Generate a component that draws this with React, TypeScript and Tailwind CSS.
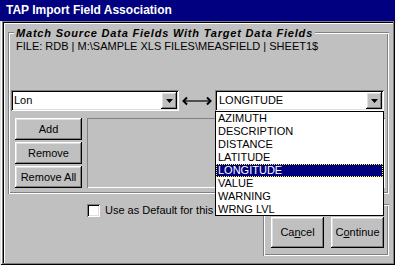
import React from 'react';

const raised =
  'bg-[#c0c0c0] shadow-[inset_-1px_-1px_#000,inset_1px_1px_#fff,inset_-2px_-2px_#808080,inset_2px_2px_#dfdfdf]';
const sunken =
  'shadow-[inset_1px_1px_#808080,inset_-1px_-1px_#fff,inset_2px_2px_#000,inset_-2px_-2px_#dfdfdf]';
const etched =
  'shadow-[inset_1px_1px_#808080,inset_-1px_-1px_#fff,inset_2px_2px_#fff,inset_-2px_-2px_#808080]';

const items = ['AZIMUTH', 'DESCRIPTION', 'DISTANCE', 'LATITUDE', 'LONGITUDE', 'VALUE', 'WARNING', 'WRNG LVL'];

function DropButton() {
  return (
    <div className={`w-[16px] h-[17px] flex items-center justify-center ${raised}`}>
      <svg width="7" height="4" viewBox="0 0 7 4">
        <polygon points="0,0 7,0 3.5,4" fill="#000" />
      </svg>
    </div>
  );
}

function Button({ children, className = '' }: { children: React.ReactNode; className?: string }) {
  return <div className={`flex items-center justify-center ${raised} ${className}`}>{children}</div>;
}

export default function App() {
  return (
    <div className="w-[395px] h-[265px] bg-[#c0c0c0] flex flex-col overflow-hidden text-black text-[11px] leading-[13px] font-['Liberation_Sans',Arial,sans-serif] shadow-[inset_1px_0_#dfdfdf,inset_-1px_-1px_#000,inset_2px_0_#fff,inset_-2px_-2px_#808080]">
      {/* Title bar */}
      <div className="h-[21px] shrink-0 bg-[#000080] text-white font-bold text-[12px] pl-[6px] flex items-center">
        TAP Import Field Association
      </div>

      <div className="flex-1 pl-[2px] pr-[2px] pb-[2px]">
        <div className="h-full pt-[2px] pl-[2px] shadow-[inset_1px_1px_#808080,inset_2px_2px_#000,inset_3px_3px_#fff]">
          {/* Group box */}
          <div className={`relative ml-[4px] mt-[9px] w-[381px] h-[162px] ${etched}`}>
            <div className="absolute left-[6px] top-[-5px] px-[2px] bg-[#c0c0c0] font-bold italic tracking-[0.8px]">
              Match Source Data Fields With Target Data Fields
            </div>
            <div className="pt-[8px] pl-[8px]">FILE: RDB | M:\SAMPLE XLS FILES\MEASFIELD | SHEET1$</div>

            <div className="mt-[37px] ml-[3px] flex items-center">
              <div className={`w-[168px] h-[21px] bg-white p-[2px] flex items-center ${sunken}`}>
                <span className="flex-1 pl-[1px]">Lon</span>
                <DropButton />
              </div>
              <div className="w-[36px] flex justify-center">
                <svg width="30" height="10" viewBox="0 0 30 10">
                  <path d="M5 1.5 L1.5 5 L5 8.5" fill="none" stroke="#000" strokeWidth="2" />
                  <path d="M25 1.5 L28.5 5 L25 8.5" fill="none" stroke="#000" strokeWidth="2" />
                  <line x1="2" y1="5" x2="28" y2="5" stroke="#000" strokeWidth="1.2" />
                </svg>
              </div>
              <div className={`relative w-[169px] h-[21px] bg-white p-[2px] flex items-center ${sunken}`}>
                <span className="flex-1 pl-[2px]">LONGITUDE</span>
                <DropButton />
                <div className="absolute top-full left-0 w-full h-[105px] bg-white border border-black z-10">
                  {items.map((it) => (
                    <div
                      key={it}
                      className={`h-[13px] pl-[2px] ${
                        it === 'LONGITUDE'
                          ? 'bg-[#000080] text-white outline-1 outline-dotted outline-[#ffff00] -outline-offset-1'
                          : ''
                      }`}
                    >
                      {it}
                    </div>
                  ))}
                </div>
              </div>
            </div>

            <div className="mt-[7px] ml-[7px] flex">
              <div className="flex flex-col gap-[2px] w-[67px]">
                <Button className="h-[22px]">Add</Button>
                <Button className="h-[22px]">Remove</Button>
                <Button className="h-[22px]">Remove All</Button>
              </div>
              <div className="ml-[5px] w-[298px] h-[70px] shadow-[inset_1px_1px_#808080,inset_-1px_-1px_#fff]" />
            </div>
          </div>

          {/* Bottom row */}
          <div className="mt-[10px] mr-[4px] flex">
            <div className="ml-[83px] flex-1 flex items-start">
              <div className="flex items-center gap-[5px] h-[13px]">
                <div className={`w-[13px] h-[13px] bg-white ${sunken}`} />
                <span className="whitespace-nowrap">Use as Default for this table</span>
              </div>
            </div>
            <div className={`w-[126px] h-[52px] pl-[8px] pt-[13px] flex gap-[7px] ${etched}`}>
              <Button className="w-[53px] h-[31px]">
                Ca<u>n</u>cel
              </Button>
              <Button className="w-[53px] h-[31px]">
                C<u>o</u>ntinue
              </Button>
            </div>
          </div>
        </div>
      </div>
    </div>
  );
}
